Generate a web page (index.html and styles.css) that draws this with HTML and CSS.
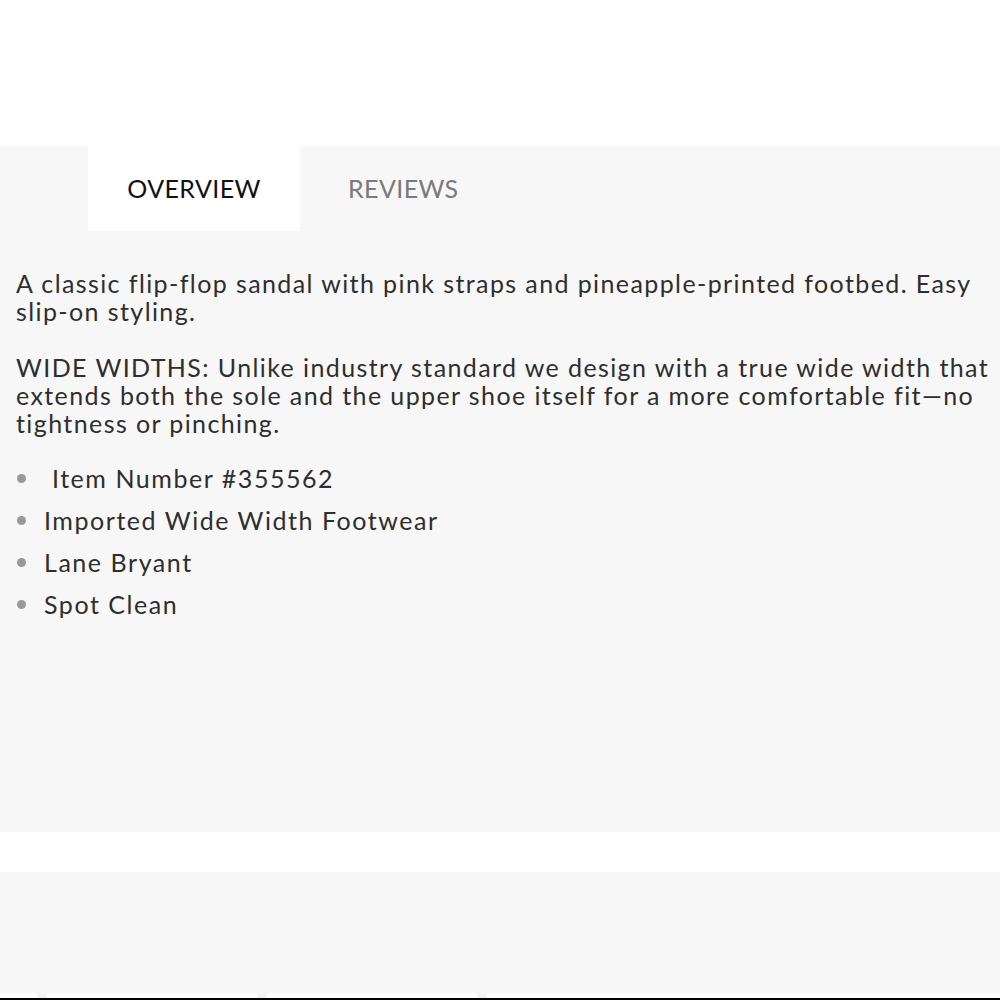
FILE: index.html
```html
<!DOCTYPE html>
<html>
<head>
<meta charset="utf-8">
<link rel="stylesheet" href="styles.css">
</head>
<body>
<div class="top"></div>
<section class="details">
  <div class="tabs">
    <div class="tab active">OVERVIEW</div>
    <div class="tab">REVIEWS</div>
  </div>
  <div class="content">
    <p>A classic flip-flop sandal with pink straps and pineapple-printed footbed. Easy slip-on styling.</p>
    <p class="last">WIDE WIDTHS: Unlike industry standard we design with a true wide width that extends both the sole and the upper shoe itself for a more comfortable fit—no tightness or pinching.</p>
    <ul class="bullets">
      <li>&nbsp;Item Number #355562</li>
      <li>Imported Wide Width Footwear</li>
      <li>Lane Bryant</li>
      <li>Spot Clean</li>
    </ul>
  </div>
</section>
<div class="gap"></div>
<section class="next"></section>
<div class="strip">
  <span class="nub n1"></span><span class="nub n2"></span><span class="nub n3"></span>
</div>
<div class="edge"></div>
</body>
</html>
```
FILE: styles.css
```css
html, body {
  margin: 0;
  padding: 0;
  background: #fff;
  font-family: "Lato", "Liberation Sans", sans-serif;
  color: #2e2e2e;
}
.top { height: 146px; }
.details {
  background: #f7f7f7;
  height: 686px;
  display: flex;
  flex-direction: column;
}
.tabs {
  display: flex;
  padding-left: 88px;
}
.tab {
  height: 85px;
  box-sizing: border-box;
  padding: 0 0 2px 48px;
  display: flex;
  align-items: center;
  font-size: 25px;
  color: #7a7a7a;
  letter-spacing: 0.4px;
}
.tab.active {
  background: #fff;
  color: #111;
  width: 212px;
  padding: 0 0 2px;
  justify-content: center;
}
.content {
  padding: 38px 6px 0 16px;
}
.content p {
  margin: 0 0 28px;
  font-size: 25px;
  line-height: 28px;
  letter-spacing: 1.4px;
}
.content p.last { margin-bottom: 20px; }
.bullets {
  margin: 0 0 0 -16px;
  padding: 0;
  list-style: none;
}
.bullets li {
  font-size: 25px;
  line-height: 42px;
  letter-spacing: 1.55px;
  display: flex;
  align-items: center;
}
.bullets li::before {
  content: "";
  width: 9px;
  height: 9px;
  border-radius: 50%;
  background: #999;
  margin: 0 18px 0 17px;
  flex: none;
}
.gap { height: 40px; }
.next {
  background: #f7f7f7;
  height: 121px;
}
.strip {
  height: 5px;
  display: flex;
}
.nub {
  width: 10px;
  height: 5px;
  background: #f3f3f3;
}
.n1 { margin-left: 37px; }
.n2 { margin-left: 210px; }
.n3 { margin-left: 210px; }
.edge {
  height: 2px;
  background: #000;
}
```
